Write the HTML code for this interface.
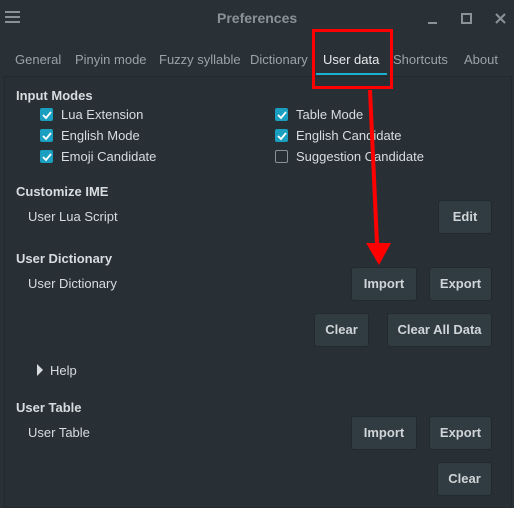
<!DOCTYPE html>
<html><head><style>
body{margin:0;width:514px;height:499px;background:#2a3136;font-family:"Liberation Sans",sans-serif;color:#d8dcdf;font-size:13px;position:relative;overflow:hidden}
.a{position:absolute;white-space:nowrap}
.panel{position:absolute;left:4px;top:76px;width:506px;height:430px;background:#283035;border:1px solid #222a2f}
.btn{position:absolute;background:#313b42;border:1px solid #222a2f;border-radius:3px;font-weight:bold;color:#d0d5d8;text-align:center;box-sizing:border-box;font-size:13px}
.cb{position:absolute;width:13px;height:13px;background:#1a9fc0;border-radius:2px}
.cb svg{position:absolute;left:1px;top:1px}
.ucb{position:absolute;width:11px;height:11px;border:1px solid #8a9398;border-radius:2px}
.tab{position:absolute;top:52px;color:#9aa3a8;font-size:13px}
b{font-weight:bold}
</style></head><body>
<svg class="a" style="left:5px;top:11px" width="16" height="12"><path d="M0 1h15M0 6h15M0 11h15" stroke="#8a9298" stroke-width="2"/></svg>
<div class="a" style="left:217px;top:10px;color:#8a9298;font-weight:bold;font-size:14px">Preferences</div>
<svg class="a" style="left:427px;top:12px" width="80" height="14"><path d="M1 11h9" stroke="#8a9298" stroke-width="2"/><rect x="35" y="2" width="9" height="9" fill="none" stroke="#8a9298" stroke-width="2"/><path d="M69 2l9 9M78 2l-9 9" stroke="#8a9298" stroke-width="2"/></svg>
<div class="tab" style="left:15px">General</div>
<div class="tab" style="left:75px">Pinyin mode</div>
<div class="tab" style="left:159px">Fuzzy syllable</div>
<div class="tab" style="left:250px">Dictionary</div>
<div class="tab" style="left:323px;color:#e6e9eb">User data</div>
<div class="a" style="left:316px;top:73px;width:71px;height:2px;background:#1ab0cf"></div>
<div class="tab" style="left:393px">Shortcuts</div>
<div class="tab" style="left:464px">About</div>
<div class="panel"></div>
<div class="a" style="left:16px;top:88px"><b>Input Modes</b></div>
<div class="cb" style="left:40px;top:108px"><svg width="11" height="11"><path d="M2 6l3 3 5-6" stroke="#fff" stroke-width="1.8" fill="none"/></svg></div><div class="a" style="left:61px;top:107px">Lua Extension</div>
<div class="cb" style="left:40px;top:129px"><svg width="11" height="11"><path d="M2 6l3 3 5-6" stroke="#fff" stroke-width="1.8" fill="none"/></svg></div><div class="a" style="left:61px;top:128px">English Mode</div>
<div class="cb" style="left:40px;top:150px"><svg width="11" height="11"><path d="M2 6l3 3 5-6" stroke="#fff" stroke-width="1.8" fill="none"/></svg></div><div class="a" style="left:61px;top:149px">Emoji Candidate</div>
<div class="cb" style="left:275px;top:108px"><svg width="11" height="11"><path d="M2 6l3 3 5-6" stroke="#fff" stroke-width="1.8" fill="none"/></svg></div><div class="a" style="left:296px;top:107px">Table Mode</div>
<div class="cb" style="left:275px;top:129px"><svg width="11" height="11"><path d="M2 6l3 3 5-6" stroke="#fff" stroke-width="1.8" fill="none"/></svg></div><div class="a" style="left:296px;top:128px">English Candidate</div>
<div class="ucb" style="left:275px;top:150px"></div><div class="a" style="left:296px;top:149px">Suggestion Candidate</div>
<div class="a" style="left:16px;top:184px"><b>Customize IME</b></div>
<div class="a" style="left:28px;top:209px">User Lua Script</div>
<div class="btn" style="left:438px;top:200px;width:54px;height:34px;line-height:32px">Edit</div>
<div class="a" style="left:16px;top:251px"><b>User Dictionary</b></div>
<div class="a" style="left:28px;top:276px">User Dictionary</div>
<div class="btn" style="left:351px;top:267px;width:66px;height:34px;line-height:32px">Import</div>
<div class="btn" style="left:429px;top:267px;width:63px;height:34px;line-height:32px">Export</div>
<div class="btn" style="left:314px;top:313px;width:55px;height:34px;line-height:32px">Clear</div>
<div class="btn" style="left:387px;top:313px;width:105px;height:34px;line-height:32px">Clear All Data</div>
<svg class="a" style="left:36px;top:364px" width="8" height="12"><path d="M1 0l6 6-6 6z" fill="#d8dcdf"/></svg>
<div class="a" style="left:50px;top:363px">Help</div>
<div class="a" style="left:16px;top:400px"><b>User Table</b></div>
<div class="a" style="left:28px;top:425px">User Table</div>
<div class="btn" style="left:351px;top:416px;width:66px;height:34px;line-height:32px">Import</div>
<div class="btn" style="left:429px;top:416px;width:63px;height:34px;line-height:32px">Export</div>
<div class="btn" style="left:437px;top:462px;width:55px;height:34px;line-height:32px">Clear</div>
<div class="a" style="left:312px;top:29px;width:75px;height:54px;border:3px solid #f00"></div>
<svg class="a" style="left:0;top:0" width="514" height="499"><path d="M370 90L377 244" stroke="#f00" stroke-width="4"/><path d="M366 243L391 243L379 265z" fill="#f00"/></svg>
</body></html>
